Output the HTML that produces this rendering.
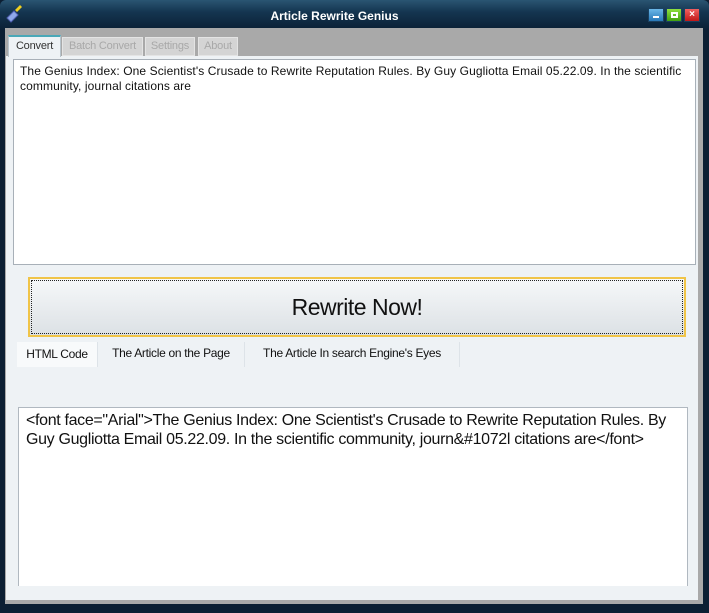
<!DOCTYPE html>
<html><head><style>
*{margin:0;padding:0;box-sizing:border-box}
body{width:709px;height:613px;background:#0c1f33;font-family:"Liberation Sans",Arial,sans-serif;position:relative;overflow:hidden}
.abs{position:absolute}
</style></head><body>
<div class="abs" style="left:0;top:0;width:709px;height:30px;background:linear-gradient(#2a5572,#143550 40%,#0b2035);border-radius:6px 6px 0 0"></div>
<svg class="abs" style="left:4px;top:4px" width="20" height="20" viewBox="0 0 20 20"><path d="M3 14 L10 7 L14 11 L7 18 Z" fill="#8fa8e8" stroke="#5060b0" stroke-width="1"/><path d="M11 6 L16 1 L18 3 L13 8Z" fill="#f0d020"/></svg>
<div class="abs" style="left:0;top:9px;width:669px;text-align:center;color:#fff;font-weight:bold;font-size:12px">Article Rewrite Genius</div>
<div class="abs" style="left:648px;top:8px;width:16px;height:14px;background:linear-gradient(#6cb8e8,#2878b8);border:1px solid #1a4060"><div style="margin:7px 0 0 4px;width:6px;height:2px;background:#fff"></div></div>
<div class="abs" style="left:666px;top:8px;width:16px;height:14px;background:linear-gradient(#90e040,#40a010);border:1px solid #1a4060"><div style="margin:3px 0 0 4px;width:7px;height:6px;border:2px solid #fff"></div></div>
<div class="abs" style="left:684px;top:8px;width:16px;height:14px;background:linear-gradient(#f06060,#c01818);border:1px solid #1a4060;color:#fff;font-size:10px;font-weight:bold;text-align:center;line-height:12px">×</div>
<div class="abs" style="left:5px;top:28px;width:698px;height:576px;background:#a9a9a9"></div>
<div class="abs" style="left:6px;top:56px;width:692px;height:544px;background:#eef2f5"></div>
<div class="abs" style="left:8px;top:35px;width:53px;height:22px;background:#eef2f5;border:1px solid #b8c4cc;border-top:2px solid #4aa8b8;border-bottom:none;font-size:11px;color:#333;text-align:center;line-height:18px;letter-spacing:-0.2px">Convert</div>
<div class="abs" style="left:62px;top:37px;width:81px;height:19px;background:#d4d4d4;border:1px solid #e4e4e4;font-size:11px;color:#a8a8a8;text-align:center;line-height:17px;letter-spacing:-0.2px">Batch Convert</div>
<div class="abs" style="left:145px;top:37px;width:50px;height:19px;background:#d4d4d4;border:1px solid #e4e4e4;font-size:11px;color:#a8a8a8;text-align:center;line-height:17px;letter-spacing:-0.2px">Settings</div>
<div class="abs" style="left:198px;top:37px;width:40px;height:19px;background:#d4d4d4;border:1px solid #e4e4e4;font-size:11px;color:#a8a8a8;text-align:center;line-height:17px;letter-spacing:-0.2px">About</div>
<div class="abs" style="left:13px;top:59px;width:683px;height:206px;background:#fff;border:1px solid #a8b0b8;padding:4px 6px;font-size:12px;line-height:15px;color:#111;letter-spacing:0.1px">The Genius Index: One Scientist's Crusade to Rewrite Reputation Rules. By Guy Gugliotta Email 05.22.09. In the scientific community, journal citations are</div>
<div class="abs" style="left:28px;top:277px;width:658px;height:60px;border:2px solid #f0c448;background:linear-gradient(#f6f8f9,#dce1e5);padding:1px">
<div style="width:100%;height:100%;border:1px dotted #222;text-align:center;font-size:23px;line-height:52px;color:#111;letter-spacing:-0.5px">Rewrite Now!</div></div>
<div class="abs" style="left:17px;top:342px;width:80px;height:25px;background:#f8fafb;font-size:12px;line-height:25px;text-align:center;color:#111;letter-spacing:-0.3px">HTML Code</div>
<div class="abs" style="left:97px;top:342px;width:148px;height:25px;border-left:1px solid #dde3e8;border-right:1px solid #dde3e8;font-size:12px;line-height:23px;text-align:center;color:#111;letter-spacing:-0.3px">The Article on the Page</div>
<div class="abs" style="left:245px;top:342px;width:215px;height:25px;border-right:1px solid #dde3e8;font-size:12px;line-height:23px;text-align:center;color:#111;letter-spacing:-0.3px">The Article In search Engine's Eyes</div>
<div class="abs" style="left:18px;top:407px;width:670px;height:179px;background:#fff;border:1px solid #b0b8c0;border-bottom:none;padding:3px 7px;font-size:16px;line-height:19px;color:#111;letter-spacing:-0.33px">&lt;font face="Arial"&gt;The Genius Index: One Scientist's Crusade to Rewrite Reputation Rules. By Guy Gugliotta Email 05.22.09. In the scientific community, journ&amp;#1072l citations are&lt;/font&gt;</div>
</body></html>
